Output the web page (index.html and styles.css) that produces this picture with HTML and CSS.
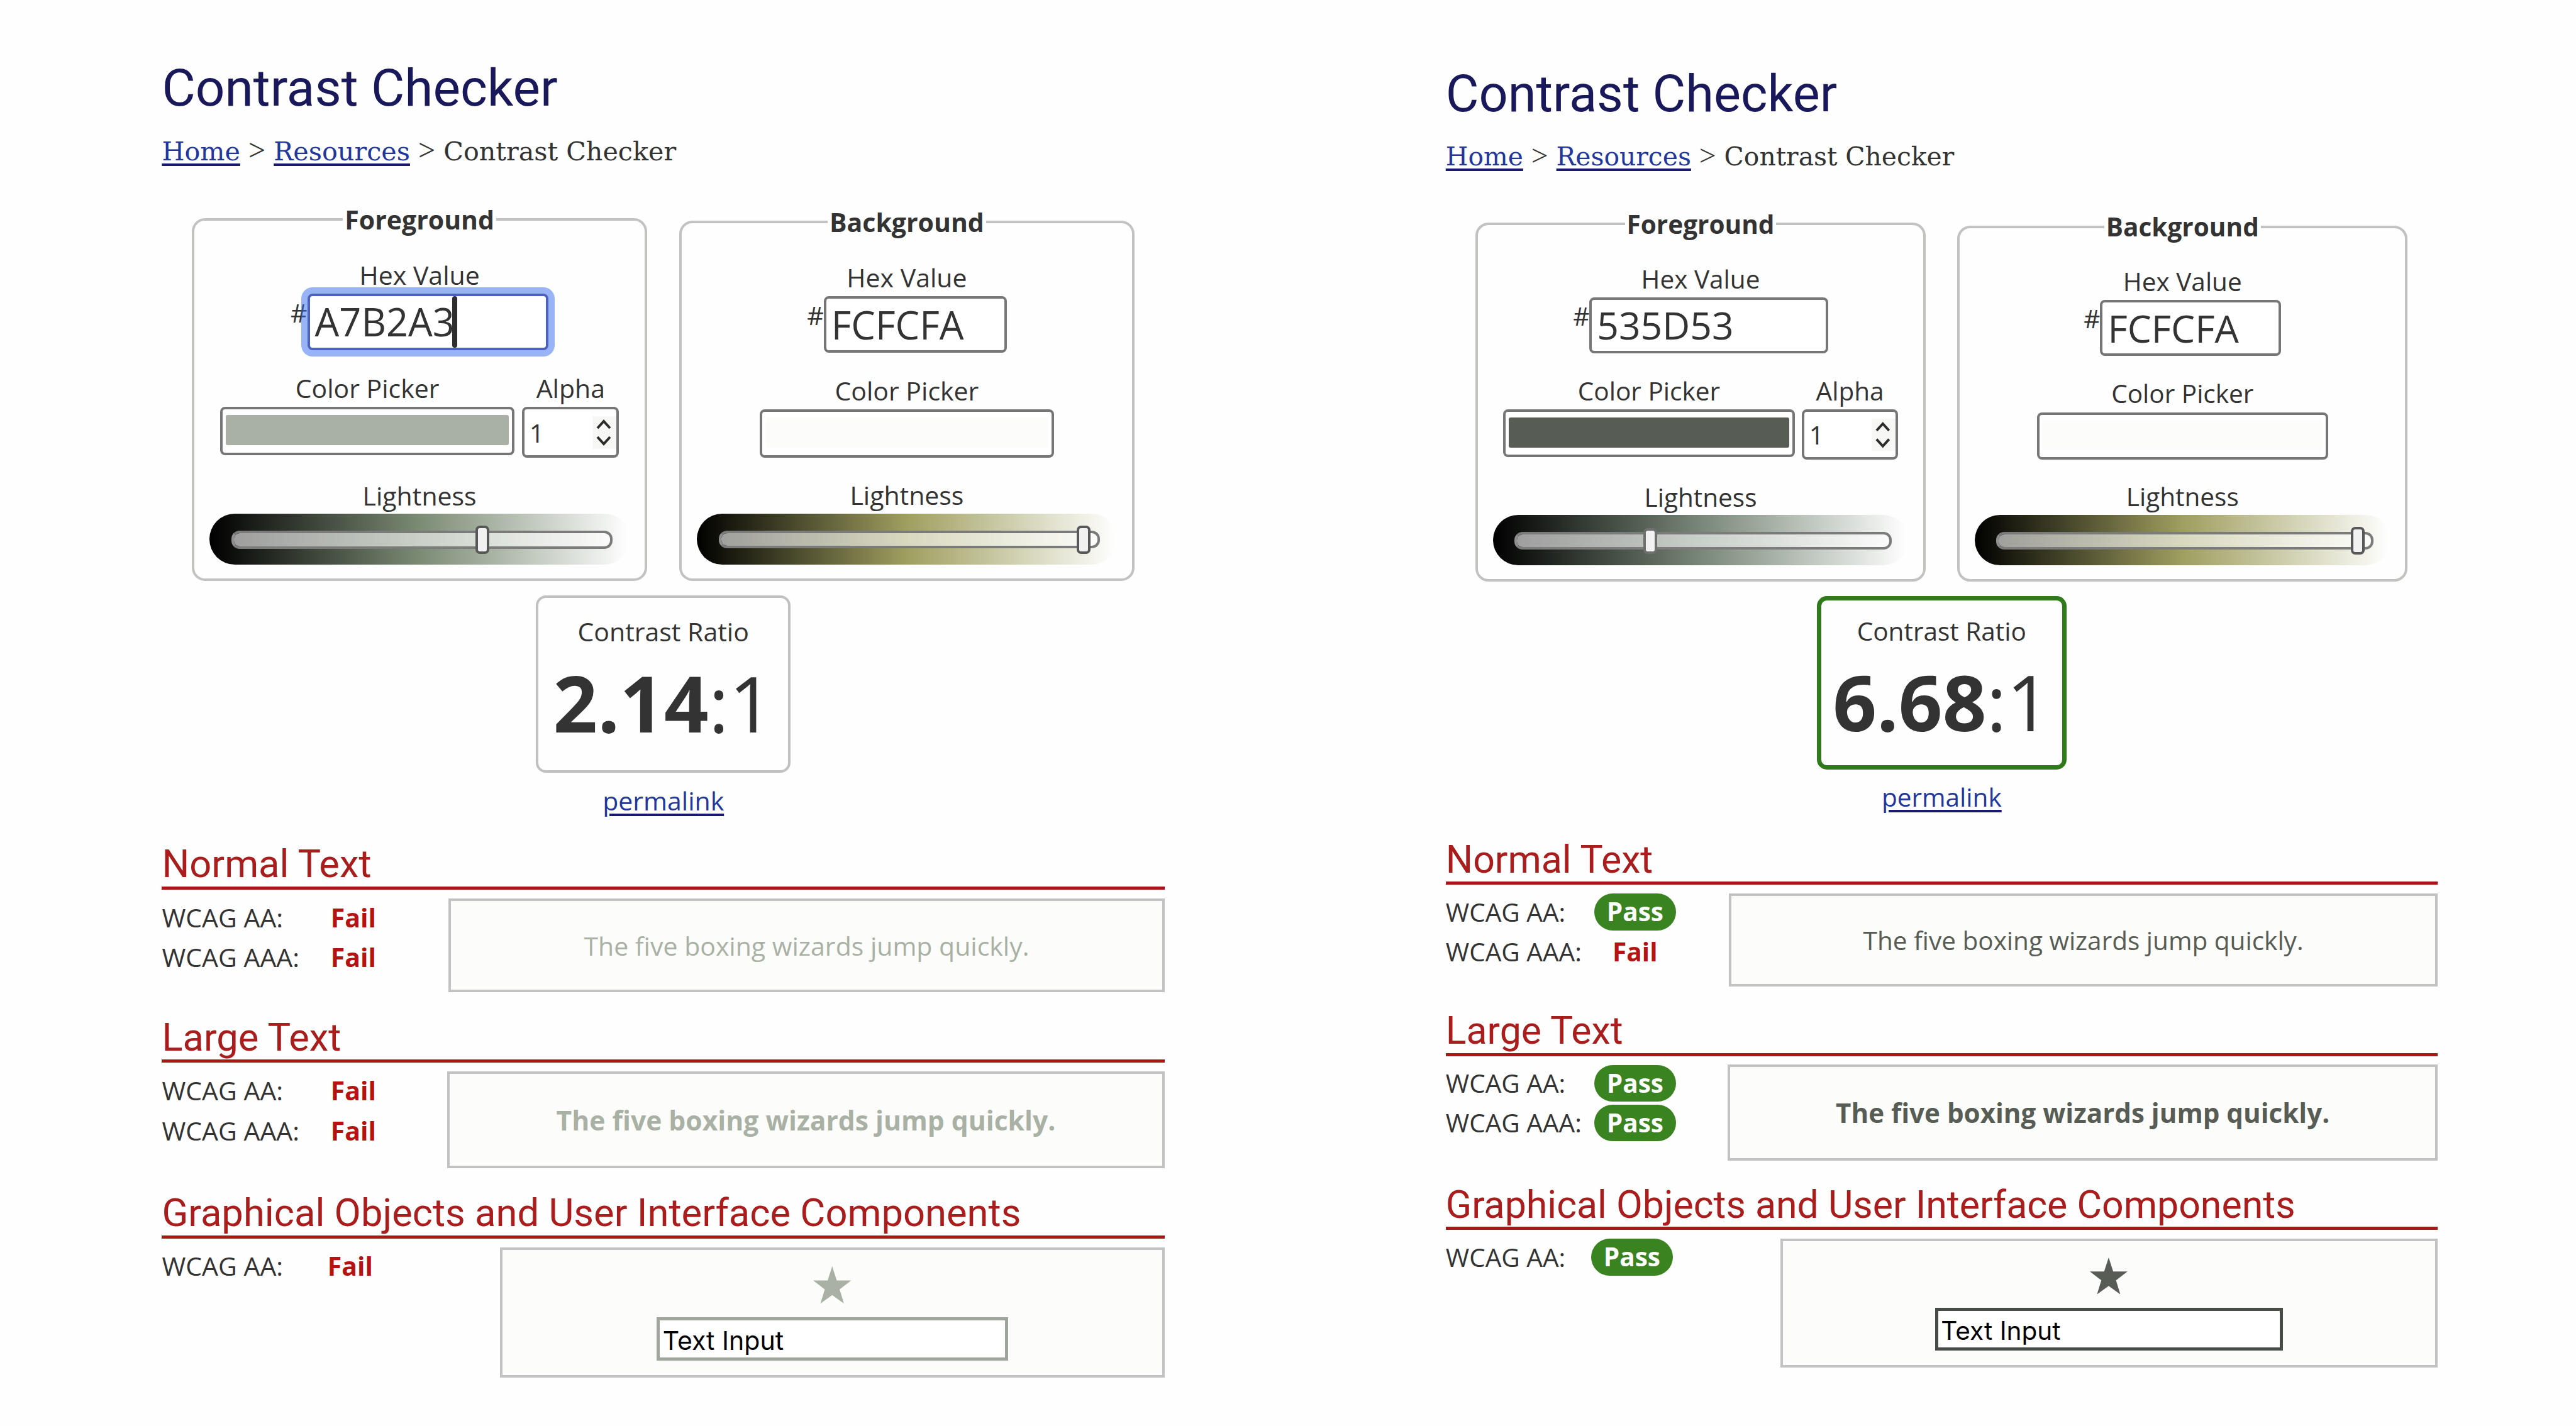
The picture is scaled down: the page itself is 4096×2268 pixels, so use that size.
FILE: index.html
```html
<!DOCTYPE html>
<html lang="en">
<head>
<meta charset="utf-8">
<title>Contrast Checker</title>
<link rel="stylesheet" href="styles.css">
</head>
<body>
<main class="compare">
  <section class="panel panel-before">
    <h1>Contrast Checker</h1>
    <nav class="crumbs"><a href="#">Home</a> <span class="sep">&gt;</span> <a href="#">Resources</a> <span class="sep">&gt;</span> Contrast Checker</nav>
    <div class="pickers">
      <fieldset class="fg">
        <legend>Foreground</legend>
        <div class="label">Hex Value</div>
        <div class="hex"><span class="hash">#</span><div class="field wide focused">A7B2A3<i class="caret"></i></div></div>
        <div class="color-row">
          <div class="col"><div class="label">Color Picker</div><div class="swatch"><div class="chip"></div></div></div>
          <div class="col"><div class="label">Alpha</div><div class="alpha">1<svg class="spin" viewBox="0 0 38 52"><path d="M8 19 18 8 28 19M8 33 18 44 28 33"/></svg></div></div>
        </div>
        <div class="label light">Lightness</div>
        <div class="slider"><div class="track"></div><div class="thumb" style="--at:423.1"></div></div>
      </fieldset>
      <fieldset class="bg">
        <legend>Background</legend>
        <div class="label">Hex Value</div>
        <div class="hex"><span class="hash">#</span><div class="field">FCFCFA</div></div>
        <div class="color-row">
          <div class="col"><div class="label">Color Picker</div><div class="swatch"><div class="chip"></div></div></div>
        </div>
        <div class="label light">Lightness</div>
        <div class="slider"><div class="track"></div><div class="thumb" style="--at:603.8"></div></div>
      </fieldset>
    </div>
    <div class="ratio"><div class="label">Contrast Ratio</div><div class="value"><b>2.14</b>:1</div></div>
    <div class="perma"><a href="#">permalink</a></div>

    <h2>Normal Text</h2>
    <div class="result">
      <dl><dt>WCAG AA:</dt><dd>Fail</dd><dt>WCAG AAA:</dt><dd>Fail</dd></dl>
      <div class="sample">The five boxing wizards jump quickly.</div>
    </div>
    <h2>Large Text</h2>
    <div class="result">
      <dl><dt>WCAG AA:</dt><dd>Fail</dd><dt>WCAG AAA:</dt><dd>Fail</dd></dl>
      <div class="sample large">The five boxing wizards jump quickly.</div>
    </div>
    <h2>Graphical Objects and User Interface Components</h2>
    <div class="result objects">
      <dl><dt>WCAG AA:</dt><dd>Fail</dd></dl>
      <div class="sample ui"><svg class="star" viewBox="0 0 100 100" preserveAspectRatio="none"><path d="M50 0 62 38H100L69.500 62 81 100 50 77 19 100 30.500 62 0 38H38Z"/></svg><div class="text-input">Text Input</div></div>
    </div>
  </section>

  <section class="panel panel-after">
    <h1>Contrast Checker</h1>
    <nav class="crumbs"><a href="#">Home</a> <span class="sep">&gt;</span> <a href="#">Resources</a> <span class="sep">&gt;</span> Contrast Checker</nav>
    <div class="pickers">
      <fieldset class="fg">
        <legend>Foreground</legend>
        <div class="label">Hex Value</div>
        <div class="hex"><span class="hash">#</span><div class="field wide">535D53</div></div>
        <div class="color-row">
          <div class="col"><div class="label">Color Picker</div><div class="swatch"><div class="chip"></div></div></div>
          <div class="col"><div class="label">Alpha</div><div class="alpha">1<svg class="spin" viewBox="0 0 38 52"><path d="M8 19 18 8 28 19M8 33 18 44 28 33"/></svg></div></div>
        </div>
        <div class="label light">Lightness</div>
        <div class="slider"><div class="track"></div><div class="thumb soft" style="--at:241.9"></div></div>
      </fieldset>
      <fieldset class="bg">
        <legend>Background</legend>
        <div class="label">Hex Value</div>
        <div class="hex"><span class="hash">#</span><div class="field">FCFCFA</div></div>
        <div class="color-row">
          <div class="col"><div class="label">Color Picker</div><div class="swatch"><div class="chip"></div></div></div>
        </div>
        <div class="label light">Lightness</div>
        <div class="slider"><div class="track"></div><div class="thumb" style="--at:604.5"></div></div>
      </fieldset>
    </div>
    <div class="ratio good"><div class="label">Contrast Ratio</div><div class="value"><b>6.68</b>:1</div></div>
    <div class="perma"><a href="#">permalink</a></div>

    <h2>Normal Text</h2>
    <div class="result">
      <dl><dt>WCAG AA:</dt><dd class="pass">Pass</dd><dt>WCAG AAA:</dt><dd>Fail</dd></dl>
      <div class="sample">The five boxing wizards jump quickly.</div>
    </div>
    <h2>Large Text</h2>
    <div class="result">
      <dl><dt>WCAG AA:</dt><dd class="pass">Pass</dd><dt>WCAG AAA:</dt><dd class="pass">Pass</dd></dl>
      <div class="sample large">The five boxing wizards jump quickly.</div>
    </div>
    <h2>Graphical Objects and User Interface Components</h2>
    <div class="result objects">
      <dl><dt>WCAG AA:</dt><dd class="pass">Pass</dd></dl>
      <div class="sample ui"><svg class="star" viewBox="0 0 100 100" preserveAspectRatio="none"><path d="M50 0 62 38H100L69.500 62 81 100 50 77 19 100 30.500 62 0 38H38Z"/></svg><div class="text-input">Text Input</div></div>
    </div>
  </section>
</main>
</body>
</html>
```
FILE: styles.css
```css
* { box-sizing: border-box; margin: 0; padding: 0; }

body {
  background: #fefefe;
  color: #333;
  font-family: "Open Sans", "Noto Sans", sans-serif;
}

.compare {
  display: flex;
  align-items: flex-start;
  width: 4096px;
  height: 2268px;
  padding-left: 257.4px;
  gap: 446.8px;
  overflow: hidden;
}

/* --u is the length unit of a panel; the two panels differ slightly in scale */
.panel {
  --u: 1px;
  --fg: #a9b1a5;
  --fg-mid: #7b8b74;
  --input-line: #a0a59c;
  flex: none;
  width: calc(1594.6 * var(--u));
  padding-top: calc(90.3 * var(--u));
  font-size: calc(41 * var(--u));
  line-height: calc(60 * var(--u));
}
.panel-after {
  --u: 0.989px;
  --fg: #575d55;
  --fg-mid: #788778;
  --input-line: #474c47;
  margin-top: 11.3px;
}

h1 {
  font: 400 calc(82 * var(--u)) / calc(100 * var(--u)) Roboto, sans-serif;
  color: #18185a;
}

.crumbs {
  margin-top: calc(20.6 * var(--u));
  font-family: "DejaVu Serif", serif;
  font-size: calc(41.3 * var(--u));
  white-space: nowrap;
}
.sep {
  font-family: "Liberation Serif", serif;
  font-size: calc(48 * var(--u));
  line-height: 1;
}

a {
  color: #22379b;
  text-decoration: underline;
  text-decoration-color: #191a6c;
  text-decoration-thickness: calc(4.2 * var(--u));
  text-underline-offset: calc(4.6 * var(--u));
}

.pickers {
  display: flex;
  align-items: flex-end;
  gap: calc(51.1 * var(--u));
  margin-top: calc(47.9 * var(--u));
  padding-left: calc(47.9 * var(--u));
}

fieldset {
  width: calc(723.7 * var(--u));
  height: calc(605.3 * var(--u));
  min-width: 0;
  border: 4px solid #c2c2c0;
  border-radius: calc(21 * var(--u));
  padding-top: calc(28 * var(--u));
}
fieldset.bg { height: calc(601 * var(--u)); }

legend {
  margin: 0 auto;
  padding: 0 calc(3 * var(--u));
  font-weight: 700;
}

.label { text-align: center; }

.hex {
  display: flex;
  justify-content: center;
  align-items: flex-start;
}
.field {
  display: flex;
  align-items: center;
  width: calc(291 * var(--u));
  height: calc(90 * var(--u));
  border: 4px solid #767676;
  border-radius: calc(8 * var(--u));
  padding: 0 0 calc(1 * var(--u)) calc(8 * var(--u));
  background: #fff;
  font-size: calc(61.3 * var(--u));
}
.field.wide { width: calc(383.6 * var(--u)); }
.field.focused {
  border-color: #4b63bd;
  box-shadow: 0 0 0 calc(10 * var(--u)) rgba(50, 105, 240, 0.5);
}
.caret {
  width: calc(8 * var(--u));
  height: calc(82 * var(--u));
  margin-left: calc(-4 * var(--u));
  margin-top: calc(2 * var(--u));
  border-radius: calc(4 * var(--u));
  background: #2e2e2e;
}

.color-row {
  display: flex;
  justify-content: center;
  gap: calc(11.8 * var(--u));
  margin-top: calc(30.3 * var(--u));
}
.swatch {
  width: calc(468.6 * var(--u));
  height: calc(76.5 * var(--u));
  border: 4px solid #767676;
  border-radius: calc(8 * var(--u));
  padding: calc(9 * var(--u)) calc(5 * var(--u)) calc(11.5 * var(--u));
  background: #fff;
}
.chip {
  height: 100%;
  border-radius: calc(3 * var(--u));
  background: var(--fg);
}
.bg .chip { background: #fcfcfa; }

.alpha {
  display: flex;
  align-items: center;
  justify-content: space-between;
  width: calc(154.2 * var(--u));
  height: calc(81 * var(--u));
  border: 4px solid #767676;
  border-radius: calc(8 * var(--u));
  padding-left: calc(7.500 * var(--u));
  background: #fff;
}
.spin {
  width: calc(38 * var(--u));
  height: calc(52 * var(--u));
  background: #f7f7f6;
  fill: none;
  stroke: #2b2b2b;
  stroke-width: 4;
}

.light { margin-top: calc(29.6 * var(--u)); }

.slider {
  position: relative;
  display: flex;
  align-items: center;
  width: calc(668 * var(--u));
  height: calc(81 * var(--u));
  margin: calc(-0.6 * var(--u)) auto 0;
  padding: calc(1.5 * var(--u)) calc(26.8 * var(--u)) 0 calc(34.6 * var(--u));
  border-radius: calc(40.5 * var(--u));
  background: linear-gradient(to right, #000, var(--fg-mid), #fff);
}
.bg .slider { background: linear-gradient(to right, #000, #9f9f60, #fff); }
.track {
  flex: 1;
  height: calc(28.5 * var(--u));
  border: 4px solid #7b7b7b;
  border-left-color: #8f8f8f;
  border-radius: calc(13 * var(--u));
  background: rgba(255, 255, 255, 0.6) padding-box;
}
.thumb {
  position: absolute;
  left: calc(var(--at) * var(--u));
  top: calc(19.2 * var(--u));
  width: calc(22.2 * var(--u));
  height: calc(44.6 * var(--u));
  border: 4px solid #585858;
  border-radius: calc(7 * var(--u));
  background: #f1f1f1;
}
.thumb.soft {
  top: calc(21 * var(--u));
  height: calc(41 * var(--u));
  border-color: #6f6f6f;
}

.ratio {
  width: calc(404.4 * var(--u));
  height: calc(281.8 * var(--u));
  margin: calc(23.4 * var(--u)) auto 0;
  border: 4px solid #c0c0be;
  border-radius: calc(16 * var(--u));
  padding-top: calc(22.7 * var(--u));
}
.ratio.good {
  width: calc(401.4 * var(--u));
  height: calc(278.6 * var(--u));
  border: 7px solid #2f7a1a;
  padding-top: calc(19.2 * var(--u));
}
.value {
  display: flex;
  justify-content: center;
  margin-top: calc(18.2 * var(--u));
  font-size: calc(123.5 * var(--u));
  line-height: calc(130 * var(--u));
}

.perma {
  margin-top: calc(13.9 * var(--u));
  text-align: center;
}

h2 {
  margin-top: calc(37.2 * var(--u));
  border-bottom: 5px solid #ab1616;
  font: 400 calc(61.5 * var(--u)) / calc(69.5 * var(--u)) Roboto, sans-serif;
  color: #a91d1d;
  white-space: nowrap;
}

.result {
  display: flex;
  align-items: flex-start;
  justify-content: space-between;
  margin-top: calc(11.8 * var(--u));
}
dl {
  display: grid;
  grid-template-columns: calc(238.4 * var(--u)) calc(132 * var(--u));
  grid-auto-rows: calc(63.8 * var(--u));
  align-items: center;
}
.objects dl { grid-template-columns: calc(233.4 * var(--u)) calc(132 * var(--u)); }
dd {
  text-align: center;
  font-weight: 700;
  color: #b51212;
}
.pass {
  height: calc(59.3 * var(--u));
  line-height: calc(59.3 * var(--u));
  border-radius: calc(30 * var(--u));
  background: #3a8321;
  color: #fff;
}

.sample {
  display: flex;
  align-items: center;
  justify-content: center;
  width: calc(1139 * var(--u));
  height: calc(149.7 * var(--u));
  margin-top: calc(2.1 * var(--u));
  border: 4px solid #c2c2c2;
  background: #fcfcfa;
  color: var(--fg);
}
.sample.large {
  width: calc(1141 * var(--u));
  height: calc(154 * var(--u));
  font-size: calc(42.6 * var(--u));
  font-weight: 700;
}
.sample.ui {
  flex-direction: column;
  justify-content: flex-start;
  gap: calc(21.8 * var(--u));
  width: calc(1056.6 * var(--u));
  height: calc(207.7 * var(--u));
  padding-top: calc(26 * var(--u));
}
.star {
  flex: none;
  width: calc(60.5 * var(--u));
  height: calc(59.3 * var(--u));
  fill: var(--fg);
}
.text-input {
  width: calc(559 * var(--u));
  height: calc(69 * var(--u));
  border: 5px solid var(--input-line);
  padding: calc(2 * var(--u)) 0 0 calc(4.5 * var(--u));
  background: #fff;
  color: #000;
  font-family: Inter, sans-serif;
  font-size: calc(41 * var(--u));
}
```
